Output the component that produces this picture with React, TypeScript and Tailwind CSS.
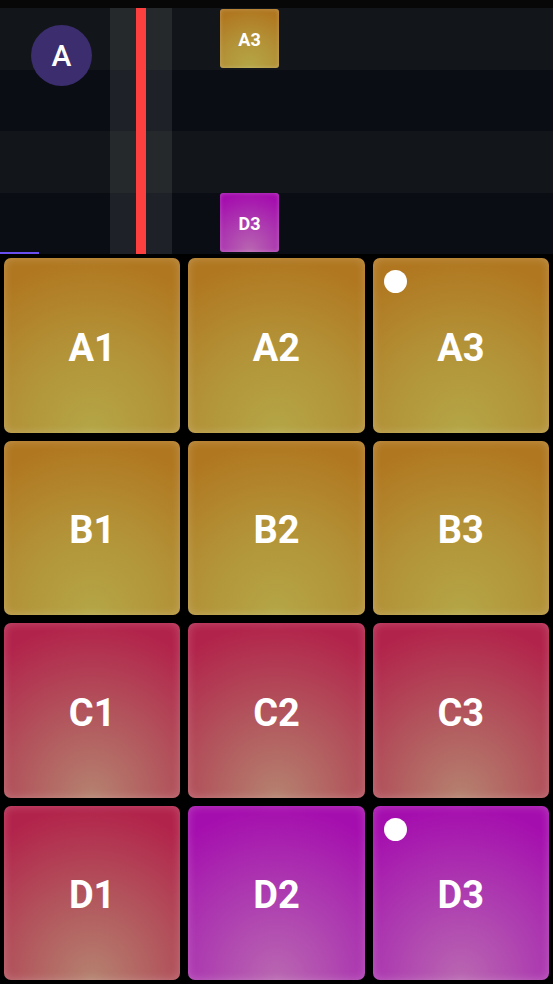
import React from 'react';

type Pad = { label: string; tone: 'gold' | 'pink' | 'purple'; dot?: boolean };

const tones = {
  gold: 'bg-[radial-gradient(ellipse_90%_100%_at_50%_100%,#b4a646_0%,#b39338_50%,#b07720_100%)]',
  pink: 'bg-[radial-gradient(ellipse_90%_100%_at_50%_100%,#b5826f_0%,#b2545c_50%,#b2234b_100%)]',
  purple: 'bg-[radial-gradient(ellipse_90%_100%_at_50%_100%,#b967b1_0%,#ad3cb0_50%,#a50eae_100%)]',
};

const pads: Pad[] = [
  { label: 'A1', tone: 'gold' },
  { label: 'A2', tone: 'gold' },
  { label: 'A3', tone: 'gold', dot: true },
  { label: 'B1', tone: 'gold' },
  { label: 'B2', tone: 'gold' },
  { label: 'B3', tone: 'gold' },
  { label: 'C1', tone: 'pink' },
  { label: 'C2', tone: 'pink' },
  { label: 'C3', tone: 'pink' },
  { label: 'D1', tone: 'pink' },
  { label: 'D2', tone: 'purple' },
  { label: 'D3', tone: 'purple', dot: true },
];

const Timeline = () => (
  <div className="relative flex h-[246px] flex-col">
    <div className="h-[61.5px] bg-[#121519]" />
    <div className="h-[61.5px] bg-[#0a0d14]" />
    <div className="h-[61.5px] bg-[#121519]" />
    <div className="h-[61.5px] bg-[#0a0d14]" />

    {/* playhead column */}
    <div className="absolute inset-y-0 left-[110px] w-[62px] bg-white/[0.085]" />
    <div className="absolute inset-y-0 left-[136px] w-[10px] bg-[#fc4040]" />

    {/* track avatar */}
    <div className="absolute left-[31px] top-[17px] flex size-[61px] items-center justify-center rounded-full bg-[#3b2d6e] text-[30px] font-medium text-white">
      A
    </div>

    {/* notes */}
    <div className={`absolute left-[220px] top-[1px] flex size-[59px] items-center justify-center rounded-[3px] pt-[2px] text-[18px] font-bold text-white shadow-[inset_0_0_4px_rgba(255,255,255,0.25)] ${tones.gold}`}>
      A3
    </div>
    <div className={`absolute left-[220px] top-[185px] flex size-[59px] items-center justify-center rounded-[3px] pt-[2px] text-[18px] font-bold text-white shadow-[inset_0_0_4px_rgba(255,255,255,0.25)] ${tones.purple}`}>
      D3
    </div>

    {/* progress */}
    <div className="absolute bottom-0 left-0 h-[2px] w-[39px] bg-[#6a4ff0]" />
  </div>
);

export default function App() {
  return (
    <div className="flex h-[984px] w-[553px] flex-col bg-black font-['Roboto',sans-serif]">
      <div className="h-2 bg-[#070707]" />
      <Timeline />
      <div className="grid flex-1 grid-cols-3 grid-rows-4 gap-2 p-1">
        {pads.map((pad) => (
          <button
            key={pad.label}
            className={`relative flex items-center justify-center rounded-[7px] pt-[6px] text-[38px] font-bold text-white shadow-[inset_0_0_10px_rgba(255,255,255,0.22)] ${tones[pad.tone]}`}
          >
            {pad.dot && <span className="absolute left-[11px] top-[12px] size-[23px] rounded-full bg-white" />}
            {pad.label}
          </button>
        ))}
      </div>
    </div>
  );
}
